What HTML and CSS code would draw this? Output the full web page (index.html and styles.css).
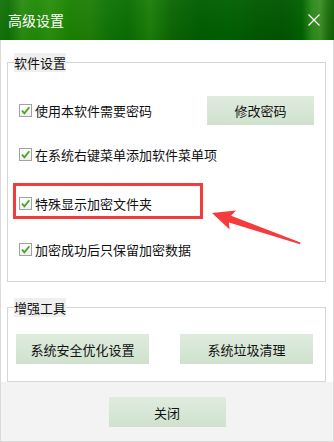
FILE: index.html
```html
<!DOCTYPE html>
<html lang="zh-CN">
<head>
<meta charset="utf-8">
<title>高级设置</title>
<link rel="stylesheet" href="styles.css">
</head>
<body>
<div class="titlebar">
  <span class="title">高级设置</span>
  <svg class="close" width="12" height="12" viewBox="0 0 12 12"><path d="M0.5 0.5 L11.5 11.5 M11.5 0.5 L0.5 11.5" stroke="#fff" stroke-width="1.2" fill="none"/></svg>
</div>
<div class="frame">
  <fieldset class="group group-soft">
    <legend>软件设置</legend>
    <div class="row row1">
      <label class="check"><span class="box"><svg width="13" height="13" viewBox="0 0 13 13"><path d="M3 6.6 L5.4 9.4 L10.3 3.2" stroke="#47a620" stroke-width="1.8" fill="none"/></svg></span>使用本软件需要密码</label>
      <button class="btn btn-pw">修改密码</button>
    </div>
    <div class="row row2">
      <label class="check"><span class="box"><svg width="13" height="13" viewBox="0 0 13 13"><path d="M3 6.6 L5.4 9.4 L10.3 3.2" stroke="#47a620" stroke-width="1.8" fill="none"/></svg></span>在系统右键菜单添加软件菜单项</label>
    </div>
    <div class="row row3">
      <label class="check"><span class="box"><svg width="13" height="13" viewBox="0 0 13 13"><path d="M3 6.6 L5.4 9.4 L10.3 3.2" stroke="#47a620" stroke-width="1.8" fill="none"/></svg></span>特殊显示加密文件夹</label>
      <div class="highlight"></div>
    </div>
    <div class="row row4">
      <label class="check"><span class="box"><svg width="13" height="13" viewBox="0 0 13 13"><path d="M3 6.6 L5.4 9.4 L10.3 3.2" stroke="#47a620" stroke-width="1.8" fill="none"/></svg></span>加密成功后只保留加密数据</label>
    </div>
  </fieldset>
  <fieldset class="group group-tools">
    <legend>增强工具</legend>
    <div class="tools">
      <button class="btn btn-tool">系统安全优化设置</button>
      <button class="btn btn-tool">系统垃圾清理</button>
    </div>
  </fieldset>
  <div class="footer">
    <button class="btn btn-close">关闭</button>
  </div>
</div>
<svg class="arrow" width="104" height="48" viewBox="0 0 104 48"><polygon points="12,13 36,10.6 31.1,15.8 100.5,42.6 100,44.2 28.9,22.4 29.6,29.6" fill="#f43c3c"/></svg>
</body>
</html>
```

FILE: styles.css
```css
* { box-sizing: border-box; }
html, body { margin: 0; padding: 0; }
body {
  position: relative;
  width: 334px;
  height: 442px;
  overflow: hidden;
  font-family: "Noto Sans CJK SC", "Microsoft YaHei", sans-serif;
  font-size: 13px;
  color: #111;
  background: #fff;
}
.titlebar {
  height: 40px;
  display: flex;
  align-items: center;
  justify-content: space-between;
  padding: 0 14px 0 8px;
  background:
    linear-gradient(180deg, rgba(255,255,255,0.04), rgba(0,0,0,0.04)),
    linear-gradient(90deg,
      #17740a 0px, #0e6f05 8px, #2a8c12 22px, #1f8a06 36px, #2a900c 50px,
      #198200 70px, #207e08 90px, #0d7305 110px, #0a6d02 128px, #1a7f08 150px,
      #0a6603 172px, #005d00 200px, #006000 230px, #005800 260px, #005500 285px,
      #006100 302px, #2a8a18 312px, #3a9025 320px, #1c700c 328px, #0f5f05 334px);
}
.title {
  color: #fff;
  font-size: 14px;
  line-height: 40px;
}
.close { display: block; }
.frame {
  height: 402px;
  border: 1px solid #dadada;
  border-top: none;
  display: flex;
  flex-direction: column;
}
.group {
  margin: 13px 7px 0 6px;
  min-width: 0;
  border: 1px solid #d6d6d6;
  padding: 0 11px 17px 6px;
}
.group legend {
  padding: 0;
  margin: 0;
  line-height: 19px;
  height: 19px;
  background: #efefef;
  font-size: 13px;
  color: #111;
}
.group-tools {
  margin-top: 16px;
  padding: 0 12px 17px 6px;
}
.row {
  position: relative;
  display: flex;
  align-items: center;
  justify-content: space-between;
  height: 29px;
  padding-left: 5px;
}
.row1 { margin-top: 24px; }
.row2 { margin-top: 15px; }
.row3 { margin-top: 20px; }
.row4 { margin-top: 17px; }
.check {
  display: flex;
  align-items: center;
  gap: 3px;
  line-height: 16px;
}
.box {
  width: 13px;
  height: 13px;
  border: 1px solid #a2a2a2;
  background: linear-gradient(180deg, #ffffff, #efefef);
  position: relative;
}
.box svg {
  position: absolute;
  left: -1px;
  top: -1px;
}
.btn {
  font-family: inherit;
  font-size: 13px;
  color: #111;
  border: none;
  padding: 0;
  background: linear-gradient(180deg, #dfebde 0%, #d6e6d5 60%, #cfe1cd 100%);
}
.btn-pw { width: 107px; height: 29px; }
.highlight {
  position: absolute;
  left: -1px;
  top: -6px;
  width: 190px;
  height: 36px;
  border: 3px solid #f23b3b;
}
.tools {
  margin: 17px 0 0 2px;
  display: flex;
  justify-content: space-between;
}
.btn-tool { width: 133px; height: 30px; }
.footer {
  flex: 1;
  background: #f3f3f3;
  display: flex;
  justify-content: center;
  padding-top: 15px;
}
.btn-close { width: 117px; height: 30px; }
.arrow {
  position: absolute;
  left: 200px;
  top: 200px;
}
```
